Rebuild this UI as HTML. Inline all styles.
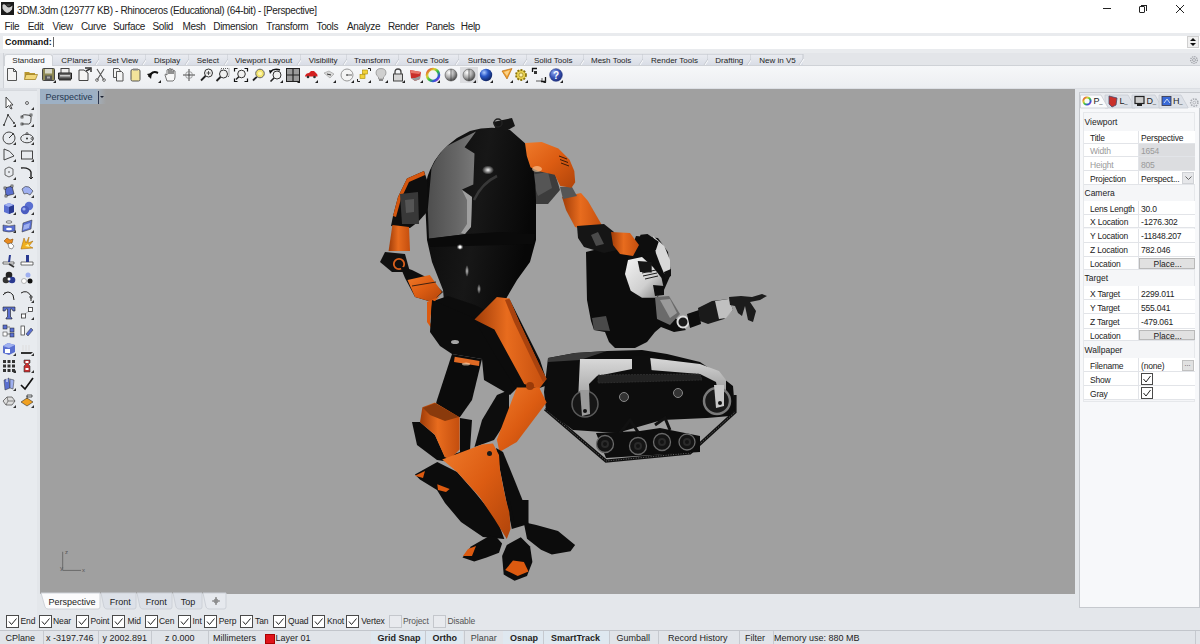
<!DOCTYPE html>
<html><head><meta charset="utf-8">
<style>
*{margin:0;padding:0;box-sizing:border-box}
html,body{width:1200px;height:644px;overflow:hidden;background:#e4e7eb;font-family:"Liberation Sans",sans-serif;font-size:9.5px;color:#1a1a1a;position:relative}
.a{position:absolute;white-space:nowrap}
.t10{font-size:10px;letter-spacing:-0.35px;color:#222}
.t8{font-size:8px;color:#1e1e1e}
.t9{font-size:9px;color:#222}
svg{overflow:visible}
</style></head><body>
<div class="a" style="left:0;top:0;width:1200px;height:33px;background:#fff"></div>
<svg class="a" style="left:1px;top:2px" width="13" height="13" viewBox="0 0 13 13"><rect width="13" height="13" fill="#1b1b1b"/><path d="M1.5 3 Q3 1.5 5 3.5 Q6 5.5 8 5.5 Q10 5 11.5 3.5 L11 7.5 Q8.5 11 6 11 Q3 10 1.5 6.5 Z" fill="#cfcfcf"/><path d="M5 2.5 Q7.5 1.5 10 2.5 Q9 5 6.5 4.5Z" fill="#444"/></svg>
<div class="a t10" style="left:17px;top:4.5px">3DM.3dm (129777 KB) - Rhinoceros (Educational) (64-bit) - [Perspective]</div>
<div class="a" style="left:1103px;top:8px;width:8px;height:1px;background:#222"></div>
<div class="a" style="left:1139px;top:6px;width:6px;height:7px;border:1px solid #222;border-radius:1px"></div>
<div class="a" style="left:1141px;top:5px;width:6px;height:6px;border-top:1px solid #222;border-right:1px solid #222"></div>
<svg class="a" style="left:1175px;top:4px" width="10" height="10"><path d="M1 1L9 9M9 1L1 9" stroke="#222" stroke-width="1"/></svg>
<div class="a t10" style="left:4.5px;top:21px">File</div>
<div class="a t10" style="left:27.7px;top:21px">Edit</div>
<div class="a t10" style="left:52.5px;top:21px">View</div>
<div class="a t10" style="left:81px;top:21px">Curve</div>
<div class="a t10" style="left:113px;top:21px">Surface</div>
<div class="a t10" style="left:152.5px;top:21px">Solid</div>
<div class="a t10" style="left:182.5px;top:21px">Mesh</div>
<div class="a t10" style="left:213.3px;top:21px">Dimension</div>
<div class="a t10" style="left:266.3px;top:21px">Transform</div>
<div class="a t10" style="left:316.5px;top:21px">Tools</div>
<div class="a t10" style="left:347px;top:21px">Analyze</div>
<div class="a t10" style="left:388px;top:21px">Render</div>
<div class="a t10" style="left:426px;top:21px">Panels</div>
<div class="a t10" style="left:460.8px;top:21px">Help</div>
<div class="a" style="left:0;top:33px;width:1200px;height:20px;background:#e9ebee"></div>
<div class="a" style="left:3px;top:36px;width:1197px;height:13px;background:#fff"></div>
<div class="a" style="left:5px;top:37px;font-weight:bold;font-size:9px;letter-spacing:-0.05px;color:#111">Command:</div>
<div class="a" style="left:53px;top:37px;width:1px;height:10px;background:#666"></div>
<div class="a" style="left:1187px;top:36px;width:12px;height:12px;background:#f0f0f0;border:1px solid #cfcfcf"></div>
<div class="a" style="left:1190px;top:38px;width:0;height:0;border-left:3px solid transparent;border-right:3px solid transparent;border-bottom:3px solid #111"></div>
<div class="a" style="left:1190px;top:43px;width:0;height:0;border-left:3px solid transparent;border-right:3px solid transparent;border-top:3px solid #111"></div>
<div class="a" style="left:0;top:53px;width:1200px;height:13px;background:#e3e5e9"></div>
<div class="a" style="left:3px;top:53px;width:1px;height:35px;background:#cfd2d7"></div>
<div class="a" style="left:4px;top:54px;width:49px;height:12px;background:#f7f8fa;border-radius:3px 3px 0 0;border:1px solid #d0d3d8;border-bottom:none"></div>
<div class="a t8" style="left:12.3px;top:56px">Standard</div>
<div class="a" style="left:53px;top:54px;width:46px;height:11px;background:linear-gradient(#e9ebf0,#d9dde6);border-top:1px solid #d3d6dc"></div>
<svg class="a" style="left:94px;top:54px" width="7" height="12"><path d="M1 11 L5 5 L5 0" stroke="#c4c8cf" stroke-width="1" fill="none"/><path d="M2 11 L6 5" stroke="#fafbfc" stroke-width="1"/></svg>
<div class="a t8" style="left:61.3px;top:56px">CPlanes</div>
<div class="a" style="left:99px;top:54px;width:47px;height:11px;background:linear-gradient(#e9ebf0,#d9dde6);border-top:1px solid #d3d6dc"></div>
<svg class="a" style="left:141px;top:54px" width="7" height="12"><path d="M1 11 L5 5 L5 0" stroke="#c4c8cf" stroke-width="1" fill="none"/><path d="M2 11 L6 5" stroke="#fafbfc" stroke-width="1"/></svg>
<div class="a t8" style="left:106.7px;top:56px">Set View</div>
<div class="a" style="left:146px;top:54px;width:43px;height:11px;background:linear-gradient(#e9ebf0,#d9dde6);border-top:1px solid #d3d6dc"></div>
<svg class="a" style="left:184px;top:54px" width="7" height="12"><path d="M1 11 L5 5 L5 0" stroke="#c4c8cf" stroke-width="1" fill="none"/><path d="M2 11 L6 5" stroke="#fafbfc" stroke-width="1"/></svg>
<div class="a t8" style="left:154px;top:56px">Display</div>
<div class="a" style="left:189px;top:54px;width:38.5px;height:11px;background:linear-gradient(#e9ebf0,#d9dde6);border-top:1px solid #d3d6dc"></div>
<svg class="a" style="left:222.5px;top:54px" width="7" height="12"><path d="M1 11 L5 5 L5 0" stroke="#c4c8cf" stroke-width="1" fill="none"/><path d="M2 11 L6 5" stroke="#fafbfc" stroke-width="1"/></svg>
<div class="a t8" style="left:196.7px;top:56px">Select</div>
<div class="a" style="left:227.5px;top:54px;width:73.5px;height:11px;background:linear-gradient(#e9ebf0,#d9dde6);border-top:1px solid #d3d6dc"></div>
<svg class="a" style="left:296px;top:54px" width="7" height="12"><path d="M1 11 L5 5 L5 0" stroke="#c4c8cf" stroke-width="1" fill="none"/><path d="M2 11 L6 5" stroke="#fafbfc" stroke-width="1"/></svg>
<div class="a t8" style="left:235px;top:56px">Viewport Layout</div>
<div class="a" style="left:301px;top:54px;width:46px;height:11px;background:linear-gradient(#e9ebf0,#d9dde6);border-top:1px solid #d3d6dc"></div>
<svg class="a" style="left:342px;top:54px" width="7" height="12"><path d="M1 11 L5 5 L5 0" stroke="#c4c8cf" stroke-width="1" fill="none"/><path d="M2 11 L6 5" stroke="#fafbfc" stroke-width="1"/></svg>
<div class="a t8" style="left:308.7px;top:56px">Visibility</div>
<div class="a" style="left:347px;top:54px;width:52px;height:11px;background:linear-gradient(#e9ebf0,#d9dde6);border-top:1px solid #d3d6dc"></div>
<svg class="a" style="left:394px;top:54px" width="7" height="12"><path d="M1 11 L5 5 L5 0" stroke="#c4c8cf" stroke-width="1" fill="none"/><path d="M2 11 L6 5" stroke="#fafbfc" stroke-width="1"/></svg>
<div class="a t8" style="left:354px;top:56px">Transform</div>
<div class="a" style="left:399px;top:54px;width:60px;height:11px;background:linear-gradient(#e9ebf0,#d9dde6);border-top:1px solid #d3d6dc"></div>
<svg class="a" style="left:454px;top:54px" width="7" height="12"><path d="M1 11 L5 5 L5 0" stroke="#c4c8cf" stroke-width="1" fill="none"/><path d="M2 11 L6 5" stroke="#fafbfc" stroke-width="1"/></svg>
<div class="a t8" style="left:406.7px;top:56px">Curve Tools</div>
<div class="a" style="left:459px;top:54px;width:68px;height:11px;background:linear-gradient(#e9ebf0,#d9dde6);border-top:1px solid #d3d6dc"></div>
<svg class="a" style="left:522px;top:54px" width="7" height="12"><path d="M1 11 L5 5 L5 0" stroke="#c4c8cf" stroke-width="1" fill="none"/><path d="M2 11 L6 5" stroke="#fafbfc" stroke-width="1"/></svg>
<div class="a t8" style="left:467.7px;top:56px">Surface Tools</div>
<div class="a" style="left:527px;top:54px;width:57px;height:11px;background:linear-gradient(#e9ebf0,#d9dde6);border-top:1px solid #d3d6dc"></div>
<svg class="a" style="left:579px;top:54px" width="7" height="12"><path d="M1 11 L5 5 L5 0" stroke="#c4c8cf" stroke-width="1" fill="none"/><path d="M2 11 L6 5" stroke="#fafbfc" stroke-width="1"/></svg>
<div class="a t8" style="left:534px;top:56px">Solid Tools</div>
<div class="a" style="left:584px;top:54px;width:59px;height:11px;background:linear-gradient(#e9ebf0,#d9dde6);border-top:1px solid #d3d6dc"></div>
<svg class="a" style="left:638px;top:54px" width="7" height="12"><path d="M1 11 L5 5 L5 0" stroke="#c4c8cf" stroke-width="1" fill="none"/><path d="M2 11 L6 5" stroke="#fafbfc" stroke-width="1"/></svg>
<div class="a t8" style="left:591px;top:56px">Mesh Tools</div>
<div class="a" style="left:643px;top:54px;width:65px;height:11px;background:linear-gradient(#e9ebf0,#d9dde6);border-top:1px solid #d3d6dc"></div>
<svg class="a" style="left:703px;top:54px" width="7" height="12"><path d="M1 11 L5 5 L5 0" stroke="#c4c8cf" stroke-width="1" fill="none"/><path d="M2 11 L6 5" stroke="#fafbfc" stroke-width="1"/></svg>
<div class="a t8" style="left:651px;top:56px">Render Tools</div>
<div class="a" style="left:708px;top:54px;width:43px;height:11px;background:linear-gradient(#e9ebf0,#d9dde6);border-top:1px solid #d3d6dc"></div>
<svg class="a" style="left:746px;top:54px" width="7" height="12"><path d="M1 11 L5 5 L5 0" stroke="#c4c8cf" stroke-width="1" fill="none"/><path d="M2 11 L6 5" stroke="#fafbfc" stroke-width="1"/></svg>
<div class="a t8" style="left:715.3px;top:56px">Drafting</div>
<div class="a" style="left:751px;top:54px;width:51.5px;height:11px;background:linear-gradient(#e9ebf0,#d9dde6);border-top:1px solid #d3d6dc"></div>
<svg class="a" style="left:797.5px;top:54px" width="7" height="12"><path d="M1 11 L5 5 L5 0" stroke="#c4c8cf" stroke-width="1" fill="none"/><path d="M2 11 L6 5" stroke="#fafbfc" stroke-width="1"/></svg>
<div class="a t8" style="left:759.3px;top:56px">New in V5</div>
<div class="a" style="left:802px;top:65px;width:398px;height:1px;background:#cfd2d7"></div>
<div class="a" style="left:53px;top:65px;width:749px;height:1px;background:#cfd2d7"></div>
<svg class="a" style="left:1189px;top:55px" width="10" height="10" viewBox="0 0 10 10"><circle cx="5" cy="5" r="3.3" fill="none" stroke="#9a9da3" stroke-width="1.2" stroke-dasharray="1.3 0.9"/><circle cx="5" cy="5" r="1.5" fill="none" stroke="#9a9da3" stroke-width="0.8"/></svg>
<div class="a" style="left:4px;top:66px;width:1196px;height:22px;background:linear-gradient(#f6f7f9,#eceef1)"></div>
<div class="a" style="left:0;top:88px;width:1200px;height:2px;background:#dcdfe4"></div>
<svg width="0" height="0" style="position:absolute"><defs>
<linearGradient id="cw" x1="0" y1="0" x2="1" y2="1"><stop offset="0" stop-color="#e03030"/><stop offset="0.3" stop-color="#e0d030"/><stop offset="0.55" stop-color="#30c040"/><stop offset="0.8" stop-color="#3050e0"/><stop offset="1" stop-color="#c030c0"/></linearGradient>
<radialGradient id="sg" cx="0.35" cy="0.3" r="0.8"><stop offset="0" stop-color="#fff"/><stop offset="0.5" stop-color="#aaa"/><stop offset="1" stop-color="#333"/></radialGradient>
<radialGradient id="sb" cx="0.35" cy="0.3" r="0.8"><stop offset="0" stop-color="#aac8ff"/><stop offset="0.4" stop-color="#2a58c8"/><stop offset="1" stop-color="#0a1a50"/></radialGradient>
<radialGradient id="sb2" cx="0.35" cy="0.3" r="0.8"><stop offset="0" stop-color="#8fa8f0"/><stop offset="0.5" stop-color="#3a55b8"/><stop offset="1" stop-color="#1a2a78"/></radialGradient>
</defs></svg>
<svg class="a" style="left:5.699999999999999px;top:68px" width="14" height="14" viewBox="0 0 14 14"><path d="M1.5 0.5 H7.5 L10.5 3.5 V12.5 H1.5Z" fill="#f4f4f4" stroke="#555"/><path d="M7.5 0.5 V3.5 H10.5" fill="none" stroke="#555"/></svg>
<svg class="a" style="left:23.5px;top:68px" width="14" height="14" viewBox="0 0 14 14"><path d="M0.5 4 H5 L6 5 H11 V11.5 H0.5Z" fill="#b8962e"/><path d="M2 6.5 H13.5 L11.5 11.5 H0.5Z" fill="#f1d77a" stroke="#9a7a1f" stroke-width="0.7"/></svg>
<svg class="a" style="left:41.5px;top:68px" width="14" height="14" viewBox="0 0 14 14"><rect x="0.5" y="0.5" width="12" height="12" rx="1" fill="#8f8a55" stroke="#444"/><rect x="3" y="1" width="7" height="4.5" fill="#d8d8c8"/><rect x="3" y="7.5" width="7" height="4.5" fill="#555"/><rect x="5" y="8.5" width="3" height="2" fill="#aaa"/><path d="M14 12 L14 15 L11 15Z" fill="#222"/></svg>
<svg class="a" style="left:58px;top:68px" width="14" height="14" viewBox="0 0 14 14"><rect x="3" y="0.5" width="8" height="5" fill="#eee" stroke="#444"/><path d="M0.5 5 H13.5 V11 H0.5Z" fill="#666" stroke="#222"/><rect x="2" y="7" width="10" height="1.5" fill="#ccc"/><rect x="1" y="11" width="12" height="1.5" fill="#333"/></svg>
<svg class="a" style="left:77.5px;top:68px" width="14" height="14" viewBox="0 0 14 14"><path d="M1 2 H6 L10 5 V12.5 H1Z" fill="#f4f4f4" stroke="#444"/><path d="M7 0 L13 0 L13 4" fill="none" stroke="#333" stroke-width="1.5"/><path d="M8 3 L12 1" stroke="#333" stroke-width="1.5"/></svg>
<svg class="a" style="left:93.5px;top:68px" width="14" height="14" viewBox="0 0 14 14"><path d="M3 1 L10 12 M10 1 L3 12" stroke="#555" stroke-width="1.1"/><circle cx="3" cy="12" r="1.4" fill="none" stroke="#777"/><circle cx="10" cy="12" r="1.4" fill="none" stroke="#777"/></svg>
<svg class="a" style="left:111.5px;top:68px" width="14" height="14" viewBox="0 0 14 14"><path d="M1.5 0.5 H6.5 L8 2 V9.5 H1.5Z" fill="#f4f4f4" stroke="#555"/><path d="M4.5 3.5 H9.5 L11 5 V13 H4.5Z" fill="#f4f4f4" stroke="#555"/></svg>
<svg class="a" style="left:128.5px;top:68px" width="14" height="14" viewBox="0 0 14 14"><rect x="2" y="1.5" width="9" height="11.5" rx="1.5" fill="#f2e39a" stroke="#555"/><rect x="4" y="0.5" width="5" height="2" fill="#888"/></svg>
<svg class="a" style="left:146.5px;top:68px" width="14" height="14" viewBox="0 0 14 14"><path d="M2 9 Q5 2 11 5" fill="none" stroke="#111" stroke-width="2"/><path d="M0 6 L4 11 L5 5Z" fill="#111"/><path d="M14 12 L14 15 L11 15Z" fill="#222"/></svg>
<svg class="a" style="left:163.5px;top:68px" width="14" height="14" viewBox="0 0 14 14"><path d="M3 13 L1 7 Q1 5 3 7 V2 Q4 0.5 5 2 V6 V1 Q6 0 7 1 V6 V1.5 Q8 0.5 9 1.5 V6 V3 Q10 2 11 3 V9 Q11 12 9 13Z" fill="#f7f7f7" stroke="#555" stroke-width="0.8"/></svg>
<svg class="a" style="left:182px;top:68px" width="14" height="14" viewBox="0 0 14 14"><path d="M7 1 V13 M1 7 H13" stroke="#333" stroke-width="0.9"/><circle cx="7" cy="7" r="3.5" fill="none" stroke="#888" stroke-width="0.8"/></svg>
<svg class="a" style="left:199.5px;top:68px" width="14" height="14" viewBox="0 0 14 14"><circle cx="8.5" cy="5" r="4" fill="#f0f0f0" stroke="#333"/><path d="M5.5 8 L1 12.5" stroke="#222" stroke-width="1.8"/><path d="M8.5 3 V7 M6.5 5 H10.5" stroke="#333" stroke-width="0.8"/></svg>
<svg class="a" style="left:216px;top:68px" width="14" height="14" viewBox="0 0 14 14"><rect x="5" y="0.5" width="8" height="8" fill="none" stroke="#666" stroke-dasharray="1 1"/><circle cx="7.5" cy="6" r="4" fill="#f0f0f0" stroke="#333"/><path d="M4.5 9 L0.5 13" stroke="#222" stroke-width="1.8"/></svg>
<svg class="a" style="left:233.5px;top:68px" width="14" height="14" viewBox="0 0 14 14"><path d="M0.5 3.5 V0.5 H3.5 M10.5 0.5 H13.5 V3.5 M13.5 10.5 V13.5 H10.5 M3.5 13.5 H0.5 V10.5" fill="none" stroke="#111" stroke-width="1.2"/><circle cx="7.5" cy="6" r="3.8" fill="#f0f0f0" stroke="#333"/><path d="M4.8 8.8 L2 11.5" stroke="#222" stroke-width="1.5"/></svg>
<svg class="a" style="left:251.5px;top:68px" width="14" height="14" viewBox="0 0 14 14"><circle cx="8" cy="5.5" r="4.3" fill="#f2e36b" stroke="#666"/><circle cx="8" cy="5.5" r="2" fill="#fff6b0"/><path d="M4.8 8.8 L1 12.5" stroke="#222" stroke-width="1.8"/></svg>
<svg class="a" style="left:268.5px;top:68px" width="14" height="14" viewBox="0 0 14 14"><circle cx="8" cy="7" r="4" fill="#f0f0f0" stroke="#333"/><path d="M5 10 L1.5 13.5" stroke="#222" stroke-width="1.6"/><path d="M1 4 Q5 0 11 2" fill="none" stroke="#111" stroke-width="1.5"/><path d="M0 2 L1 6 L3.5 3Z" fill="#111"/><path d="M14 12 L14 15 L11 15Z" fill="#222"/></svg>
<svg class="a" style="left:286px;top:68px" width="14" height="14" viewBox="0 0 14 14"><rect x="0.5" y="0.5" width="13" height="13" fill="#9a9a9a" stroke="#222"/><path d="M7 0.5 V13.5 M0.5 7 H13.5" stroke="#222" stroke-width="1.2"/><path d="M14 12 L14 15 L11 15Z" fill="#222"/></svg>
<svg class="a" style="left:303.5px;top:68px" width="14" height="14" viewBox="0 0 14 14"><path d="M1 8 Q2 5 5 5 L7 3 H10 L12 5 Q14 6 13.5 8.5 H1Z" fill="#d42020"/><circle cx="4" cy="9" r="1.3" fill="#333"/><circle cx="10.5" cy="9" r="1.3" fill="#333"/><path d="M14 12 L14 15 L11 15Z" fill="#222"/></svg>
<svg class="a" style="left:322px;top:68px" width="14" height="14" viewBox="0 0 14 14"><path d="M2 5 L7 3 L12 6 L8 10 Z" fill="#d8d8d8" stroke="#999" stroke-width="0.6"/><path d="M5 6 L9 7" stroke="#333" stroke-width="1"/><path d="M14 12 L14 15 L11 15Z" fill="#222"/></svg>
<svg class="a" style="left:340px;top:68px" width="14" height="14" viewBox="0 0 14 14"><circle cx="7" cy="7" r="6" fill="#f4f4f4" stroke="#999" stroke-width="1"/><path d="M7 7 H12" stroke="#666"/><circle cx="7" cy="7" r="1" fill="#666"/><path d="M14 12 L14 15 L11 15Z" fill="#222"/></svg>
<svg class="a" style="left:356.5px;top:68px" width="14" height="14" viewBox="0 0 14 14"><rect x="5.5" y="2" width="5" height="4" fill="#f2d23a" stroke="#a88a00" stroke-width="0.6"/><rect x="3" y="6.5" width="5" height="4" fill="#f2d23a" stroke="#a88a00" stroke-width="0.6"/><path d="M0.5 11 V13.5 H3 M11 0.5 H13.5 V3" fill="none" stroke="#222"/><path d="M14 12 L14 15 L11 15Z" fill="#222"/></svg>
<svg class="a" style="left:373.5px;top:68px" width="14" height="14" viewBox="0 0 14 14"><path d="M7 0.5 Q12 0.5 12 5 Q12 7.5 9.5 9 V11 H4.5 V9 Q2 7.5 2 5 Q2 0.5 7 0.5Z" fill="#cfcfcf" stroke="#888" stroke-width="0.7"/><rect x="5" y="11" width="4" height="2" fill="#888"/><path d="M14 12 L14 15 L11 15Z" fill="#222"/></svg>
<svg class="a" style="left:391px;top:68px" width="14" height="14" viewBox="0 0 14 14"><path d="M4 6 V4 Q4 1 7 1 Q10 1 10 4 V6" fill="none" stroke="#444" stroke-width="1.3"/><rect x="2.5" y="6" width="9" height="7" fill="#d6d6d6" stroke="#444"/><path d="M14 12 L14 15 L11 15Z" fill="#222"/></svg>
<svg class="a" style="left:408.5px;top:68px" width="14" height="14" viewBox="0 0 14 14"><path d="M1 2 L12 4 L11 11 L6 13 L2 10Z" fill="#c9302a"/><path d="M1 2 L12 4 L10 6 L2 5Z" fill="#e8776a"/><path d="M2 10 L6 13 L11 11 V8 L6 10Z" fill="#9a9a9a"/><path d="M14 12 L14 15 L11 15Z" fill="#222"/></svg>
<svg class="a" style="left:426px;top:68px" width="14" height="14" viewBox="0 0 14 14"><circle cx="7" cy="7" r="6" fill="none" stroke="url(#cw)" stroke-width="2.6"/><path d="M14 12 L14 15 L11 15Z" fill="#222"/></svg>
<svg class="a" style="left:443.5px;top:68px" width="14" height="14" viewBox="0 0 14 14"><circle cx="7" cy="7" r="6" fill="url(#sg)" stroke="#555" stroke-width="0.6"/><path d="M7 1 V13" stroke="#333" stroke-width="0.6"/></svg>
<svg class="a" style="left:461.5px;top:68px" width="14" height="14" viewBox="0 0 14 14"><rect x="-2" y="-1" width="18" height="16" fill="#dcdde0"/><circle cx="7" cy="7" r="6" fill="url(#sg)" stroke="#555" stroke-width="0.6"/><path d="M7 1 V13" stroke="#333" stroke-width="0.6"/><path d="M14 12 L14 15 L11 15Z" fill="#222"/></svg>
<svg class="a" style="left:479px;top:68px" width="14" height="14" viewBox="0 0 14 14"><circle cx="7" cy="7" r="6.2" fill="url(#sb)"/><path d="M14 12 L14 15 L11 15Z" fill="#222"/></svg>
<svg class="a" style="left:498.5px;top:68px" width="14" height="14" viewBox="0 0 14 14"><path d="M3 3 L13 0.5 L8 11Z" fill="#f0a030" stroke="#b06000" stroke-width="0.6"/><path d="M5 4 L11 2 L8 8Z" fill="#fbd38a"/><path d="M14 12 L14 15 L11 15Z" fill="#222"/></svg>
<svg class="a" style="left:514px;top:68px" width="14" height="14" viewBox="0 0 14 14"><circle cx="7" cy="7" r="5" fill="#e8d050" stroke="#8a7410" stroke-width="1.8" stroke-dasharray="2 1.2"/><circle cx="7" cy="7" r="2" fill="#fff3b0" stroke="#8a7410" stroke-width="0.6"/><path d="M14 12 L14 15 L11 15Z" fill="#222"/></svg>
<svg class="a" style="left:531.5px;top:68px" width="14" height="14" viewBox="0 0 14 14"><path d="M0.5 4 V0.5 H5 M13.5 9 V13.5 H9" fill="none" stroke="#111" stroke-width="1.3"/><path d="M4 13 H10 M10 10 V13" stroke="#333" stroke-width="0.8"/><rect x="2" y="3" width="3" height="3" fill="#333"/><path d="M14 12 L14 15 L11 15Z" fill="#222"/></svg>
<svg class="a" style="left:548.5px;top:68px" width="14" height="14" viewBox="0 0 14 14"><circle cx="7" cy="7" r="6.3" fill="url(#sb2)" stroke="#1c2f7a" stroke-width="0.6"/><text x="7" y="11" font-size="10" font-weight="bold" fill="#fff" text-anchor="middle" font-family="Liberation Sans">?</text><path d="M14 12 L14 15 L11 15Z" fill="#222"/></svg>
<div class="a" style="left:0;top:90px;width:37px;height:540px;background:#e8ebef"></div>
<div class="a" style="left:0;top:90px;width:37px;height:1px;background:#d6d9de"></div>
<svg class="a" style="left:2px;top:95.8px" width="14" height="14" viewBox="0 0 14 14"><path d="M4 1 L4 12 L6.5 9.5 L9 13 L10 12.5 L8 9 L11 9Z" fill="#fff" stroke="#333" stroke-width="0.9"/></svg>
<svg class="a" style="left:20px;top:95.8px" width="14" height="14" viewBox="0 0 14 14"><circle cx="7" cy="7" r="1.5" fill="none" stroke="#444" stroke-width="0.8"/><path d="M14 11 L14 14 L11 14Z" fill="#333"/></svg>
<svg class="a" style="left:2px;top:113.3px" width="14" height="14" viewBox="0 0 14 14"><path d="M2 12 L6 2 L12 10" fill="none" stroke="#333" stroke-width="0.9"/><circle cx="2" cy="12" r="1" fill="#333"/><circle cx="6" cy="2" r="1" fill="#333"/><circle cx="12" cy="10" r="1" fill="#333"/><path d="M14 11 L14 14 L11 14Z" fill="#333"/></svg>
<svg class="a" style="left:20px;top:113.3px" width="14" height="14" viewBox="0 0 14 14"><path d="M2 4 Q2 1 7 2 Q12 2 11 6 Q11 12 7 11 H2" fill="none" stroke="#333" stroke-width="0.9"/><rect x="1" y="3" width="2" height="2" fill="none" stroke="#333" stroke-width="0.7"/><rect x="10" y="1" width="2" height="2" fill="none" stroke="#333" stroke-width="0.7"/><rect x="1" y="10" width="2" height="2" fill="none" stroke="#333" stroke-width="0.7"/><path d="M14 11 L14 14 L11 14Z" fill="#333"/></svg>
<svg class="a" style="left:2px;top:130.9px" width="14" height="14" viewBox="0 0 14 14"><circle cx="7" cy="7" r="6" fill="none" stroke="#333" stroke-width="0.9"/><path d="M7 7 L11 3" stroke="#333"/><circle cx="11" cy="3" r="1" fill="#333"/><path d="M14 11 L14 14 L11 14Z" fill="#333"/></svg>
<svg class="a" style="left:20px;top:130.9px" width="14" height="14" viewBox="0 0 14 14"><ellipse cx="7" cy="7.5" rx="6.3" ry="4.3" fill="none" stroke="#333" stroke-width="0.9"/><circle cx="7" cy="7.5" r="1" fill="#333"/><circle cx="7" cy="2.5" r="1" fill="none" stroke="#333" stroke-width="0.7"/><circle cx="12" cy="7.5" r="1" fill="none" stroke="#333" stroke-width="0.7"/><path d="M14 11 L14 14 L11 14Z" fill="#333"/></svg>
<svg class="a" style="left:2px;top:148.4px" width="14" height="14" viewBox="0 0 14 14"><path d="M2 1 L2 12 L12 8 Q8 2 2 1" fill="none" stroke="#333" stroke-width="0.9"/><path d="M14 11 L14 14 L11 14Z" fill="#333"/></svg>
<svg class="a" style="left:20px;top:148.4px" width="14" height="14" viewBox="0 0 14 14"><rect x="1.5" y="3" width="11" height="8" fill="none" stroke="#333" stroke-width="0.9"/><path d="M14 11 L14 14 L11 14Z" fill="#333"/></svg>
<svg class="a" style="left:2px;top:166.0px" width="14" height="14" viewBox="0 0 14 14"><path d="M3 3 L7 1 L11 3 L11 9 L7 11 L3 9Z" fill="none" stroke="#444" stroke-width="0.8"/><circle cx="7" cy="6" r="0.8" fill="#444"/><path d="M14 11 L14 14 L11 14Z" fill="#333"/></svg>
<svg class="a" style="left:20px;top:166.0px" width="14" height="14" viewBox="0 0 14 14"><path d="M1 2 Q9 1 11 6 V12" fill="none" stroke="#222" stroke-width="1.4"/><path d="M9 11 L11 13 L13 11" fill="none" stroke="#222"/></svg>
<svg class="a" style="left:2px;top:183.6px" width="14" height="14" viewBox="0 0 14 14"><path d="M3 4 L10 2 L12 10 L4 12Z" fill="#5a6fd0" stroke="#222" stroke-width="0.6"/><rect x="2" y="3" width="2" height="2" fill="#fff" stroke="#111" stroke-width="0.6"/><rect x="9" y="1" width="2" height="2" fill="#fff" stroke="#111" stroke-width="0.6"/><rect x="3" y="11" width="2" height="2" fill="#fff" stroke="#111" stroke-width="0.6"/><path d="M14 11 L14 14 L11 14Z" fill="#333"/></svg>
<svg class="a" style="left:20px;top:183.6px" width="14" height="14" viewBox="0 0 14 14"><path d="M2 5 Q5 1 9 3 L13 7 L10 11 Q7 8 4 10Z" fill="#9fb0f0" stroke="#333" stroke-width="0.6"/><path d="M14 11 L14 14 L11 14Z" fill="#333"/></svg>
<svg class="a" style="left:2px;top:201.1px" width="14" height="14" viewBox="0 0 14 14"><path d="M2 4 L7 2 L12 4 V11 L7 13 L2 11Z" fill="#5a6fd0"/><path d="M2 4 L7 2 L12 4 L7 6Z" fill="#9fb0f0"/><path d="M7 6 V13 L12 11 V4Z" fill="#2a3a90"/><path d="M14 11 L14 14 L11 14Z" fill="#333"/></svg>
<svg class="a" style="left:20px;top:201.1px" width="14" height="14" viewBox="0 0 14 14"><circle cx="9" cy="5" r="4.2" fill="#5a6fd0"/><circle cx="5" cy="9" r="4.2" fill="#4a5cc0"/><circle cx="4" cy="8" r="1.6" fill="#9fb0f0"/><path d="M14 11 L14 14 L11 14Z" fill="#333"/></svg>
<svg class="a" style="left:2px;top:218.7px" width="14" height="14" viewBox="0 0 14 14"><ellipse cx="7" cy="3" rx="3" ry="1.2" fill="none" stroke="#333" stroke-width="0.6"/><path d="M1 6 Q7 8 13 6 V12 Q7 14 1 12Z" fill="#5a6fd0" stroke="#333" stroke-width="0.5"/><ellipse cx="7" cy="10" rx="3" ry="1.3" fill="#fff"/><path d="M14 11 L14 14 L11 14Z" fill="#333"/></svg>
<svg class="a" style="left:20px;top:218.7px" width="14" height="14" viewBox="0 0 14 14"><path d="M3 4 L12 1 L11 10 L2 13Z" fill="#5a6fd0" stroke="#333" stroke-width="0.5"/><path d="M4 6 L10 4 L9 9 L3 11Z" fill="#9fb0f0"/><path d="M14 11 L14 14 L11 14Z" fill="#333"/></svg>
<svg class="a" style="left:2px;top:236.2px" width="14" height="14" viewBox="0 0 14 14"><path d="M2 5 L5 2 L8 4 L11 3 L10 7 L6 8Z" fill="#e88a20" stroke="#8a4a00" stroke-width="0.6"/><path d="M6 8 L9 7 L12 10 L10 13 L7 12Z" fill="#fff" stroke="#555" stroke-width="0.6"/></svg>
<svg class="a" style="left:20px;top:236.2px" width="14" height="14" viewBox="0 0 14 14"><path d="M1 13 L4 2 L6 7 L9 1 L8 7 L13 5 L9 10 L13 12Z" fill="#f0b020" stroke="#a06000" stroke-width="0.5"/><path d="M5 10 L8 8 L10 11Z" fill="#fff3a0"/></svg>
<svg class="a" style="left:2px;top:253.8px" width="14" height="14" viewBox="0 0 14 14"><path d="M1 8 H12 V10 H1Z" fill="#fff" stroke="#333" stroke-width="0.7"/><path d="M7 1 L9 1 L8 8 L6 8Z" fill="#2a3a90"/><path d="M7 10 L12 13" stroke="#333" stroke-width="1.6"/></svg>
<svg class="a" style="left:20px;top:253.8px" width="14" height="14" viewBox="0 0 14 14"><path d="M1 8 H13 V11 H1Z" fill="#fff" stroke="#333" stroke-width="0.7"/><path d="M6 1 L9 1 L9 8 L6 8Z" fill="#2a3a90"/></svg>
<svg class="a" style="left:2px;top:271.3px" width="14" height="14" viewBox="0 0 14 14"><circle cx="7" cy="4" r="3.3" fill="#222"/><circle cx="4" cy="9" r="3.3" fill="#333"/><circle cx="10" cy="9" r="3.3" fill="#2a3a90"/><circle cx="7" cy="8" r="1.5" fill="#fff"/></svg>
<svg class="a" style="left:20px;top:271.3px" width="14" height="14" viewBox="0 0 14 14"><circle cx="8" cy="4" r="2.5" fill="#9fb0f0"/><circle cx="4" cy="10" r="2.5" fill="#fff" stroke="#777" stroke-width="0.5"/><circle cx="10" cy="10" r="2.5" fill="#111"/></svg>
<svg class="a" style="left:2px;top:288.9px" width="14" height="14" viewBox="0 0 14 14"><path d="M1 6 Q6 0 11 6 L12 11" fill="none" stroke="#222" stroke-width="1"/><circle cx="3" cy="4" r="0.8" fill="#333"/></svg>
<svg class="a" style="left:20px;top:288.9px" width="14" height="14" viewBox="0 0 14 14"><path d="M1 4 Q7 0 11 7 L11 12" fill="none" stroke="#222" stroke-width="1"/><path d="M3 3 Q7 2 9 5" fill="none" stroke="#888" stroke-width="0.6"/><circle cx="11" cy="8" r="1.3" fill="none" stroke="#333" stroke-width="0.7"/><path d="M14 11 L14 14 L11 14Z" fill="#333"/></svg>
<svg class="a" style="left:2px;top:306.4px" width="14" height="14" viewBox="0 0 14 14"><path d="M1 1 H13 V5 H11 L10 3 H8.5 V11 L10 12 V13 H4 V12 L5.5 11 V3 H4 L3 5 H1Z" fill="#5a6fd0" stroke="#222" stroke-width="0.6"/></svg>
<svg class="a" style="left:20px;top:306.4px" width="14" height="14" viewBox="0 0 14 14"><rect x="1.5" y="8" width="4" height="4" fill="#fff" stroke="#333" stroke-width="0.8"/><rect x="8.5" y="1.5" width="4" height="4" fill="#fff" stroke="#333" stroke-width="0.8"/><path d="M5 8 L9 5" stroke="#333" stroke-width="0.7" stroke-dasharray="1 1"/><path d="M14 11 L14 14 L11 14Z" fill="#333"/></svg>
<svg class="a" style="left:2px;top:323.9px" width="14" height="14" viewBox="0 0 14 14"><rect x="1" y="1" width="4" height="4" fill="#5a6fd0" stroke="#222" stroke-width="0.5"/><rect x="1" y="8" width="4" height="4" fill="#fff" stroke="#222" stroke-width="0.5"/><rect x="8" y="4" width="4" height="4" fill="#5a6fd0" stroke="#222" stroke-width="0.5"/><rect x="8" y="9" width="4" height="4" fill="#5a6fd0" stroke="#222" stroke-width="0.5"/><path d="M5 3 H8 M5 10 H8" stroke="#333" stroke-width="0.6"/></svg>
<svg class="a" style="left:20px;top:323.9px" width="14" height="14" viewBox="0 0 14 14"><rect x="1" y="2" width="3.5" height="9" fill="#fff" stroke="#333" stroke-width="0.7"/><path d="M6 10 L11 4 L13 6 L8 12Z" fill="#5a6fd0" stroke="#333" stroke-width="0.5"/></svg>
<svg class="a" style="left:2px;top:341.5px" width="14" height="14" viewBox="0 0 14 14"><path d="M1 4 L6 1 L13 3 V10 L7 13 L1 11Z" fill="#5a6fd0"/><path d="M1 4 L6 1 L13 3 L7 6Z" fill="#9fb0f0"/><rect x="3" y="7" width="5" height="4" fill="#fff"/><path d="M14 11 L14 14 L11 14Z" fill="#333"/></svg>
<svg class="a" style="left:20px;top:341.5px" width="14" height="14" viewBox="0 0 14 14"><path d="M1 10 H13 L11 12 H1Z" fill="#333"/><path d="M3 3 V9 M6 3 V9 M9 3 V9" stroke="#fff" stroke-width="1.2"/><path d="M3 3 V9 M6 3 V9 M9 3 V9" stroke="#999" stroke-width="0.4"/><path d="M14 11 L14 14 L11 14Z" fill="#333"/></svg>
<svg class="a" style="left:2px;top:359.1px" width="14" height="14" viewBox="0 0 14 14"><g fill="#333"><rect x="1" y="1" width="3" height="3"/><rect x="5.5" y="1" width="3" height="3"/><rect x="10" y="1" width="3" height="3"/><rect x="1" y="5.5" width="3" height="3"/><rect x="5.5" y="5.5" width="3" height="3"/><rect x="10" y="5.5" width="3" height="3"/><rect x="1" y="10" width="3" height="3"/><rect x="5.5" y="10" width="3" height="3"/><rect x="10" y="10" width="3" height="3"/></g><path d="M14 11 L14 14 L11 14Z" fill="#333"/></svg>
<svg class="a" style="left:20px;top:359.1px" width="14" height="14" viewBox="0 0 14 14"><path d="M4 1 H10 V4 L8 5 L10 7 V13 H4 V7 L6 5 L4 4Z" fill="#c83030" stroke="#333" stroke-width="0.6"/><rect x="5.5" y="2" width="3" height="2" fill="#fff"/><rect x="5.5" y="9" width="3" height="2" fill="#fff"/><path d="M14 11 L14 14 L11 14Z" fill="#333"/></svg>
<svg class="a" style="left:2px;top:376.6px" width="14" height="14" viewBox="0 0 14 14"><path d="M2 3 L7 1 L8 11 L3 13Z" fill="#5a6fd0" stroke="#333" stroke-width="0.5"/><path d="M8 2 L12 3 L11 12 L8 11Z" fill="#9fb0f0" stroke="#333" stroke-width="0.5"/><path d="M5 1 V5" stroke="#fff" stroke-width="1"/><path d="M14 11 L14 14 L11 14Z" fill="#333"/></svg>
<svg class="a" style="left:20px;top:376.6px" width="14" height="14" viewBox="0 0 14 14"><path d="M1 8 L5 12 L13 1" fill="none" stroke="#111" stroke-width="1.7"/></svg>
<svg class="a" style="left:2px;top:394.2px" width="14" height="14" viewBox="0 0 14 14"><path d="M1 7 L5 3 L10 3 L13 7 L10 11 H4Z" fill="#ddd" stroke="#444" stroke-width="0.7"/><path d="M5 3 L6 7 L4 11 M6 7 H13" stroke="#444" stroke-width="0.6" fill="none"/><path d="M14 11 L14 14 L11 14Z" fill="#333"/></svg>
<svg class="a" style="left:20px;top:394.2px" width="14" height="14" viewBox="0 0 14 14"><path d="M1 8 L7 4 L13 8 L7 12Z" fill="#f0a020" stroke="#333" stroke-width="0.6"/><path d="M7 1 H12 V3 H7Z" fill="none" stroke="#333" stroke-width="0.8"/><path d="M7 2 V5" stroke="#333" stroke-width="0.7"/><path d="M14 11 L14 14 L11 14Z" fill="#333"/></svg>
<div class="a" style="left:37px;top:89px;width:3px;height:505px;background:#e3e6ea"></div>
<div class="a" style="left:40px;top:89px;width:1035px;height:505px;background:#a0a0a0"></div>
<div class="a" style="left:40px;top:89px;width:57px;height:14.5px;background:#9db0c4"></div>
<div class="a" style="left:97px;top:89px;width:9px;height:14.5px;background:linear-gradient(90deg,#a4b0bc,#a0a0a0)"></div>
<div class="a" style="left:45.5px;top:92px;font-size:9px;color:#243650">Perspective</div>
<div class="a" style="left:98px;top:91px;width:1px;height:13px;background:#2a3550"></div>
<div class="a" style="left:100px;top:96px;width:0;height:0;border-left:2px solid transparent;border-right:2px solid transparent;border-top:2.5px solid #1a2030"></div>
<svg class="a" style="left:55px;top:545px" width="40" height="30"><path d="M7.7 6.8 V25.4 H26" stroke="#6a6a6a" stroke-width="1" fill="none"/><text x="10" y="9" font-size="6" fill="#555" font-family="Liberation Sans">z</text><text x="27" y="27" font-size="6" fill="#555" font-family="Liberation Sans">x</text><text x="5" y="25" font-size="6" fill="#555" font-family="Liberation Sans">y</text></svg>
<svg class="a" style="left:0;top:0" width="1200" height="644" viewBox="0 0 1200 644">
<defs>
<clipPath id="vpc"><rect x="40" y="89" width="1035" height="505"/></clipPath>
<linearGradient id="org" x1="0" y1="0" x2="1" y2="1"><stop offset="0" stop-color="#ef7a2a"/><stop offset="0.5" stop-color="#dc5c12"/><stop offset="1" stop-color="#b0440a"/></linearGradient>
<linearGradient id="org2" x1="0" y1="0" x2="1" y2="0"><stop offset="0" stop-color="#a03c08"/><stop offset="0.45" stop-color="#e86c1e"/><stop offset="1" stop-color="#c44e0e"/></linearGradient>
<linearGradient id="gry" x1="0" y1="0" x2="1" y2="0"><stop offset="0" stop-color="#4e4e4e"/><stop offset="0.6" stop-color="#666"/><stop offset="1" stop-color="#7a7a7a"/></linearGradient><linearGradient id="blk" x1="0" y1="0" x2="1" y2="0.3"><stop offset="0" stop-color="#090909"/><stop offset="0.55" stop-color="#171717"/><stop offset="1" stop-color="#070707"/></linearGradient>
<radialGradient id="hl" cx="0.5" cy="0.5" r="0.5"><stop offset="0" stop-color="#fff" stop-opacity="0.95"/><stop offset="1" stop-color="#fff" stop-opacity="0"/></radialGradient>
<linearGradient id="wht" x1="0" y1="0" x2="1" y2="1"><stop offset="0" stop-color="#f4f4f4"/><stop offset="0.6" stop-color="#cfcfcf"/><stop offset="1" stop-color="#7a7a7a"/></linearGradient>
<linearGradient id="brk" x1="0" y1="0" x2="0" y2="1"><stop offset="0" stop-color="#d8d8d8"/><stop offset="1" stop-color="#8a8a8a"/></linearGradient>
</defs>
<g clip-path="url(#vpc)">
<!-- TANK -->
<path d="M545 409 L606 461 L690 453 L735 412 L735 395" fill="none" stroke="#111" stroke-width="3.2"/>
<path d="M545 409 L606 461 L690 453 L735 412" fill="none" stroke="#666" stroke-width="1" stroke-dasharray="1 1.5"/>
<path d="M544 392 L548 358 L575 353 L607 351 L642 350 L667 354 L700 362 L715 372 L733 386 L735 410 L730 416 L707 418 L662 420 L617 433 L573 430 L546 410 Z" fill="#0d0d0d"/>
<path d="M548 358 L575 353 L607 351 L580 360 L548 362Z" fill="#3a3a3a"/>
<path d="M580 359 L632 359 L632 369 L597 376 L589 384 L591 413 L583 417 L578 401 Z" fill="url(#brk)"/>
<path d="M650 358 L700 364 L719 371 L726 380 L726 402 L720 403 L716 382 L700 374 L650 370Z" fill="url(#brk)"/><path d="M632 356 L650 356 L652 374 L632 376Z" fill="#0e0e0e"/>
<circle cx="585" cy="404" r="13" fill="#161616" stroke="#5a5a5a" stroke-width="1.5"/>
<path d="M580 390 L589 390 L590 414 L582 416Z" fill="#9a9a9a"/>
<circle cx="585" cy="411" r="2" fill="#111"/>
<circle cx="717" cy="401" r="13" fill="#1a1a1a" stroke="#7a7a7a" stroke-width="2.5"/>
<path d="M714 385 L724 385 L724 406 L716 408Z" fill="#c8c8c8"/>
<circle cx="720" cy="403" r="2" fill="#111"/>
<circle cx="624" cy="397" r="4.5" fill="#333" stroke="#888" stroke-width="1"/>
<circle cx="678" cy="393" r="4.5" fill="#333" stroke="#888" stroke-width="1"/>
<path d="M598 375 L700 374 L702 380 L598 383Z" fill="#222" stroke="#3a3a3a" stroke-width="0.6" stroke-dasharray="2 1"/>
<path d="M596 433 L640 431 L660 428 L700 436 L700 452 L606 458Z" fill="#0d0d0d"/>
<g fill="#141414" stroke="#6a6a6a" stroke-width="1.3"><circle cx="605" cy="444" r="8.5"/><circle cx="638" cy="446" r="8.5"/><circle cx="662" cy="442" r="8.5"/><circle cx="687" cy="442" r="8"/></g>
<g fill="none" stroke="#2a2a2a" stroke-width="2"><circle cx="605" cy="444" r="3"/><circle cx="638" cy="446" r="3"/><circle cx="662" cy="442" r="3"/><circle cx="687" cy="442" r="3"/></g>
<path d="M620 433 L630 420 L640 435 M655 425 L665 418 L670 430" stroke="#111" stroke-width="3" fill="none"/>
<!-- SMALL ROBOT BODY -->
<path d="M586 252 L610 246 L628 246 L640 262 L660 300 L686 330 L674 332 L661 327 L655 332 L647 342 L635 348 L615 348 L609 342 L605 332 L594 330 L591 321 L587 300 Z" fill="#0c0c0c"/>
<path d="M636 236 L658 238 L668 252 L671 274 L664 290 L656 298 L636 298 L624 280 L628 258Z" fill="#0e0e0e"/>
<path d="M592 318 L606 316 L610 331 L594 330Z" fill="#4a4a4a"/>
<!-- small robot head -->
<path d="M628 260 L642 257 L653 267 L661.5 278 L664.3 290.7 L656 297.7 L642 297.7 L630.7 290.7 L625 274Z" fill="url(#wht)"/>
<path d="M653 236 L664.3 246 L670 260 L670 271 L664.3 274 L660 264 L655.9 253Z" fill="#d8d8d8"/>
<path d="M640.5 234.8 L647.5 234 L658.7 241.8 L655.9 250 L642 253 L637.7 244.6Z" fill="#0e0e0e"/>
<path d="M637.7 261 L651.7 262 L651.7 272.5 L640 272Z" fill="#151515"/>
<path d="M642 273 L656 270 M643 276 L657 273 M645 279 L658 276" stroke="#1a1a1a" stroke-width="1"/>
<path d="M653 285 L664 286 L664 295 L655 296Z" fill="#0e0e0e"/>
<path d="M664 272 L671 269 L671 276 L665 279Z" fill="#111"/>
<!-- small robot arm -->
<path d="M655 297 L669 296 L680 314 L670 325 L657 319Z" fill="#6a6a6a"/>
<path d="M660 300 L670 299 L677 313 L670 318Z" fill="#9a9a9a"/>
<circle cx="683" cy="322" r="5.5" fill="#1a1a1a" stroke="#ddd" stroke-width="2"/>
<path d="M687 314 L699 310 L701 324 L690 328Z" fill="#0d0d0d"/>
<path d="M698 308 L712 301 L729 299 L733 310 L724 319 L708 324 L700 321Z" fill="#1a1a1a"/>
<path d="M715 301 L729 299 L733 310 L726 318 L719 319Z" fill="#c0c0c0"/>
<path d="M729 297 L741 296 L752 297 L762 294 L767 296 L760 300 L750 302 L756 311 L753 322 L748 320 L745 306 L742 316 L738 313 L735 306 L730 305Z" fill="#1c1c1c"/>
<!-- BIG ROBOT RIGHT ARM -->
<path d="M562 197 L581 193 L588 201 L603 227 L588 231 L575 227 L566 210Z" fill="url(#org2)"/>
<path d="M560 187 L572 187 L577 196 L563 199Z" fill="#555"/>
<path d="M577 226 L604 224 L614 232 L617 250 L604 253 L584 247 L578 238Z" fill="#151515"/>
<path d="M591 235 L598 232 L604 244 L596 246Z" fill="#4a4a4a"/>
<path d="M611 232 L630 233 L639 245 L633 256 L620 254 L613 245Z" fill="url(#org2)"/>
<path d="M521 168 L553 167 L560 190 L548 204 L530 204 L522 190Z" fill="#3c3c3c"/>
<path d="M530 175 L548 172 L552 188 L538 196Z" fill="#555"/>
<!-- TORSO -->
<path d="M470 131 Q490 125 510 130 L527 145 Q536 170 536 200 L536 240 L530 262 L517 280 L507 297 L500 314 L476 322 L445 312 L443 290 L432 262 L427 240 L425 200 Q425 180 430 170 Q437 152 457 138 Z" fill="url(#blk)"/>
<path d="M431.5 168 Q438 154 447 146 L467 136 L476 131.5 L464.6 147.3 L474.5 153.5 L473.3 184.5 L462 189.5 L472 197 L471 226.8 L464.6 234.2 L429 238.5 L427.8 209.4 Z" fill="url(#gry)"/>
<path d="M462 190 L472 197 L471 227 L465 234 L461 233 L467 224 L467 200Z" fill="#b0b0b0" opacity="0.75"/>
<path d="M427.5 239 L464.6 234.2 L500 232 L535 234 L533 244 L430 247Z" fill="#0a0a0a"/>
<ellipse cx="488" cy="170" rx="6" ry="4.5" fill="url(#hl)"/>
<path d="M474 200 Q482 183 497 176" stroke="#5a5a5a" stroke-width="2.5" fill="none" opacity="0.5"/>
<ellipse cx="460" cy="247" rx="3.5" ry="3" fill="url(#hl)"/>
<ellipse cx="460" cy="247" rx="1.5" ry="1.5" fill="#fff"/>
<ellipse cx="467" cy="271" rx="2" ry="6" fill="url(#hl)" opacity="0.8"/>
<ellipse cx="479" cy="289" rx="2" ry="5" fill="url(#hl)" opacity="0.7"/>
<!-- head nub -->
<path d="M493 122 L512 118 L515 126 L506 131 L496 130Z" fill="#151515"/>
<circle cx="498" cy="123" r="4" fill="none" stroke="#222" stroke-width="1.5"/>
<!-- right shoulder pad -->
<path d="M525 143 L541.7 142 L558.4 148.6 L569.6 159.8 L574.3 171 L575.2 182.2 L571.5 187.8 L560.3 186 L554.7 174.7 L538 171 L530.5 167.3 L526.8 156Z" fill="url(#org)"/>
<path d="M559 156 L567 159 M560 159.5 L568 162.5 M561 163 L569 166" stroke="#3a1a08" stroke-width="1"/>
<ellipse cx="537" cy="169" rx="5" ry="3" fill="#ffd0a0" opacity="0.6"/>
<!-- LEFT ARM -->
<path d="M424 171 L407 178.6 L398 197 L393 216 L391 226 L410 228 L418 222 L427 212 L427 180Z" fill="#0e0e0e"/>
<path d="M424 171 L407 178.6 L398 197 L393 216 L396 217 L401 199 L409 182 L425 175Z" fill="#d4560e"/>
<path d="M400 194 L418 192 L419 224 L402 224Z" fill="#383838"/>
<path d="M405 200 L414 199 L414 212 L406 213Z" fill="#555"/>
<path d="M392.4 225 L409 227 L410 251 L388.6 251Z" fill="url(#org2)"/>
<path d="M385 252 L405 254 L410 272 L392 272 L380 262Z" fill="#101010"/>
<circle cx="399" cy="264" r="5.2" fill="none" stroke="#d8601c" stroke-width="1.8"/>
<path d="M400 266 L412 270 L428 278 L443 292 L432 302 L415 297 L405 278Z" fill="#0e0e0e"/>
<path d="M407.5 280 L429.8 275 L442 292 L432 302 L415 297Z" fill="url(#org)"/>
<path d="M412 286 L436 282" stroke="#402010" stroke-width="1"/>
<!-- PELVIS / HIP -->
<path d="M430 302 L448 296 L475 305 L505 320 L500 345 L474 344 L452 338 L432 332Z" fill="#0c0c0c"/>
<path d="M427 302 L440 296 L432 304 L430 322 L436 335 L427 322Z" fill="#dc5a10"/>
<path d="M432 300 L474 318 L495 330 L509 357 L520 385 L510 395 L484 380 L482 359 L452 354 L440 346 L430 332Z" fill="#0c0c0c"/>
<ellipse cx="455" cy="342" rx="4" ry="2" fill="#e8e8e8" opacity="0.7"/>
<!-- RIGHT THIGH (behind panel black) -->
<path d="M474 319 L510 300 L540 360 L548 385 L520 395 L495 355Z" fill="#0c0c0c"/>
<!-- left shin -->
<path d="M452 354 L482 359 L472 400 L460 417 L432 417 L437 400Z" fill="#0b0b0b"/>
<path d="M454.7 356.8 L479.5 361 L479 366 L454 362Z" fill="#e06a24"/>
<ellipse cx="466" cy="364" rx="4" ry="1.5" fill="#ffe0c0" opacity="0.6"/>
<!-- left ankle & foot -->
<path d="M412 422 L420 422 L435 435 L445 457 L460 452 L460 418 L472 420 L470 450 L450 462 L437 460 L417 445Z" fill="#0c0c0c"/>
<path d="M422.4 407.3 L434.8 402.4 L459.6 417.3 L459.6 449.6 L449.7 459.5 L444.7 457 L434.8 434.7 L420 422.2Z" fill="url(#org2)"/>
<path d="M423 408 L435 403 L459 417 L445 421 L430 415Z" fill="#8a3a0c"/>
<!-- right lower shin black -->
<path d="M497 395 L509 390 L509 417 L494 440 L474.5 447 L482 420Z" fill="#0d0d0d"/>
<!-- right thigh orange panel -->
<path d="M474.5 319.5 L496.9 297.1 L509.3 298.4 L519.3 322 L539.1 364.2 L546.6 379.1 L539.1 389 L524.2 384.1 L509.3 356.8 L494.4 329.4Z" fill="url(#org2)"/>
<path d="M509.3 298.4 L519.3 322 L539.1 364.2 L546.6 379.1 L543 382 L534 364 L514 322 L505 300Z" fill="#a8420e"/>
<!-- knee & lower shin orange -->
<path d="M516.8 387.5 L539.1 387.5 L546.6 402.4 L516.8 442.1 L499.4 452 L496.9 439.6Z" fill="url(#org)"/>
<circle cx="530" cy="386" r="4" fill="#9a3a08"/>
<!-- black left of foot guard -->
<path d="M414.9 474.4 L437.3 462 L457.1 472 L474.5 491.8 L496.9 519.1 L504.3 539 L483 537 L461 522 L445 503 L437 490 L419.9 479.4Z" fill="#0c0c0c"/>
<path d="M414.9 475.7 L425 471 L423 478Z" fill="#dc5a10"/>
<path d="M437.3 484.3 L449.7 489 L446 492 L438 490Z" fill="#dc5a10"/>
<!-- black behind foot guard right -->
<path d="M496 448 L503 452 L514.3 479.4 L524.2 504.2 L528.5 524 L511.8 529 L500 470Z" fill="#0c0c0c"/>
<!-- foot guard orange -->
<path d="M442.2 459.5 L482 444.6 L493 443.4 L499 455 L500 470 L503 486 L506 500 L509.3 512 L510.6 529 L506.8 539 L494.4 519.1 L479.5 496.8 L457.1 471.9Z" fill="url(#org)"/>
<circle cx="489.5" cy="453.5" r="2.5" fill="#1a1a1a"/>
<!-- feet -->
<path d="M462.5 557.5 L471 546.6 L489.7 535.7 L495.9 536.5 L502.1 543.5 L499 552.8 L486.6 557.5 L474.2 561.4Z" fill="#0c0c0c"/>
<path d="M463 556 L468 549 L476 546 L472 556Z" fill="#dc5a10"/>
<path d="M502.1 555.9 L506.8 545 L520.8 537.3 L530.1 546.6 L532.4 562.1 L527 576.1 L514.6 580.8 L503.7 574.6Z" fill="#0c0c0c"/>
<path d="M505.2 569.9 L513 560.6 L523.9 562.1 L528.5 571.5 L517.7 576.1Z" fill="#dc5a10"/>
<path d="M509.9 500 L528.5 500 L528.5 523.3 L536.3 524.9 L558 531 L575.1 545 L570.5 551.3 L551.8 554.4 L541 549.7 L527 538.8 L523.9 523.3 L515 525Z" fill="#0c0c0c"/>
</g>
</svg>
<div class="a" style="left:1075px;top:89px;width:125px;height:519px;background:#e4e7eb"></div>
<div class="a" style="left:1079px;top:91.5px;width:121px;height:516.5px;background:#f7f8fa;border:1px solid #c6c9ce"></div>
<div class="a" style="left:1080px;top:92.5px;width:120px;height:15px;background:#e9ebef"></div>
<svg class="a" style="left:1080px;top:94px" width="120" height="15"><path d="M25 14 V1 H48 L55 13.5 V14Z" fill="#dde1e8" stroke="#c8ccd3" stroke-width="0.8"/><path d="M52 14 V1 H75 L82 13.5 V14Z" fill="#dde1e8" stroke="#c8ccd3" stroke-width="0.8"/><path d="M79 14 V1 H101 L108 13.5 V14Z" fill="#dde1e8" stroke="#c8ccd3" stroke-width="0.8"/><path d="M0.5 14 V1 H21 L28 13.5 V14Z" fill="#fafbfc" stroke="#c8ccd3" stroke-width="0.8"/><circle cx="7" cy="7" r="3.6" fill="none" stroke="url(#cw)" stroke-width="2"/><path d="M29 2 L37 4 L36 11 L32 13 L29 10Z" fill="#c9302a" stroke="#4a4a6a" stroke-width="0.8"/><rect x="55" y="2.5" width="9" height="7" fill="#ccc" stroke="#222" stroke-width="1.2"/><rect x="57" y="10" width="5" height="2" fill="#222"/><rect x="82" y="2.5" width="9" height="9" fill="#3a6ad8" stroke="#334" stroke-width="0.8"/><path d="M84 9 L87 5 L90 9" stroke="#cde" fill="none"/><circle cx="114.3" cy="8.6" r="3.6" fill="none" stroke="#a9acb2" stroke-width="1.6" stroke-dasharray="1.5 1"/><circle cx="114.3" cy="8.6" r="1.4" fill="none" stroke="#a9acb2" stroke-width="0.8"/></svg>
<div class="a" style="left:1093.5px;top:96px;font-size:9px;color:#222;letter-spacing:-0.3px">P<span style="font-size:6px">_</span></div>
<div class="a" style="left:1119.5px;top:96px;font-size:9px;color:#222;letter-spacing:-0.3px">L<span style="font-size:6px">_</span></div>
<div class="a" style="left:1146.5px;top:96px;font-size:9px;color:#222;letter-spacing:-0.3px">D<span style="font-size:6px">_</span></div>
<div class="a" style="left:1173px;top:96px;font-size:9px;color:#222;letter-spacing:-0.3px">H<span style="font-size:6px">_</span></div>
<div class="a" style="left:1083px;top:112px;width:112px;height:290px;background:#f5f6f8;border:1px solid #e6e8eb"></div>
<div class="a" style="left:1084.5px;top:117.0px;font-size:8.5px;color:#222">Viewport</div>
<div class="a" style="left:1084px;top:130.5px;width:54px;height:13.0px;background:#fff;border-bottom:1px solid #e2e4e8"></div>
<div class="a" style="left:1138px;top:130.5px;width:56.5px;height:13.0px;background:#fff;border-bottom:1px solid #e2e4e8;border-left:1px solid #e2e4e8"></div>
<div class="a" style="left:1090px;top:133.0px;font-size:8.5px;letter-spacing:-0.2px;color:#222">Title</div>
<div class="a" style="left:1141px;top:133.0px;font-size:8.5px;letter-spacing:-0.2px;color:#222">Perspective</div>
<div class="a" style="left:1084px;top:143.5px;width:54px;height:13.5px;background:#fff;border-bottom:1px solid #e2e4e8"></div>
<div class="a" style="left:1138px;top:143.5px;width:56.5px;height:13.5px;background:#dcdde0;border-bottom:1px solid #e2e4e8;border-left:1px solid #e2e4e8"></div>
<div class="a" style="left:1090px;top:146.0px;font-size:8.5px;letter-spacing:-0.2px;color:#9a9a9a">Width</div>
<div class="a" style="left:1141px;top:146.0px;font-size:8.5px;letter-spacing:-0.2px;color:#9a9a9a">1654</div>
<div class="a" style="left:1084px;top:157px;width:54px;height:14px;background:#fff;border-bottom:1px solid #e2e4e8"></div>
<div class="a" style="left:1138px;top:157px;width:56.5px;height:14px;background:#dcdde0;border-bottom:1px solid #e2e4e8;border-left:1px solid #e2e4e8"></div>
<div class="a" style="left:1090px;top:159.5px;font-size:8.5px;letter-spacing:-0.2px;color:#9a9a9a">Height</div>
<div class="a" style="left:1141px;top:159.5px;font-size:8.5px;letter-spacing:-0.2px;color:#9a9a9a">805</div>
<div class="a" style="left:1084px;top:171px;width:54px;height:14px;background:#fff;border-bottom:1px solid #e2e4e8"></div>
<div class="a" style="left:1138px;top:171px;width:56.5px;height:14px;background:#fff;border-bottom:1px solid #e2e4e8;border-left:1px solid #e2e4e8"></div>
<div class="a" style="left:1090px;top:173.5px;font-size:8.5px;letter-spacing:-0.2px;color:#222">Projection</div>
<div class="a" style="left:1141px;top:173.5px;font-size:8.5px;letter-spacing:-0.2px;color:#222">Perspect...</div>
<div class="a" style="left:1182px;top:172px;width:12px;height:12px;background:#e6e7ea;border:1px solid #d0d2d6"></div>
<svg class="a" style="left:1185px;top:176px" width="7" height="5"><path d="M0.5 0.5 L3.5 3.5 L6.5 0.5" fill="none" stroke="#666" stroke-width="1"/></svg>
<div class="a" style="left:1084.5px;top:187.5px;font-size:8.5px;color:#222">Camera</div>
<div class="a" style="left:1084px;top:201px;width:54px;height:13.599999999999994px;background:#fff;border-bottom:1px solid #e2e4e8"></div>
<div class="a" style="left:1138px;top:201px;width:56.5px;height:13.599999999999994px;background:#fff;border-bottom:1px solid #e2e4e8;border-left:1px solid #e2e4e8"></div>
<div class="a" style="left:1090px;top:203.5px;font-size:8.5px;letter-spacing:-0.2px;color:#222">Lens Length</div>
<div class="a" style="left:1141px;top:203.5px;font-size:8.5px;letter-spacing:-0.2px;color:#222">30.0</div>
<div class="a" style="left:1084px;top:214.6px;width:54px;height:13.900000000000006px;background:#fff;border-bottom:1px solid #e2e4e8"></div>
<div class="a" style="left:1138px;top:214.6px;width:56.5px;height:13.900000000000006px;background:#fff;border-bottom:1px solid #e2e4e8;border-left:1px solid #e2e4e8"></div>
<div class="a" style="left:1090px;top:217.1px;font-size:8.5px;letter-spacing:-0.2px;color:#222">X Location</div>
<div class="a" style="left:1141px;top:217.1px;font-size:8.5px;letter-spacing:-0.2px;color:#222">-1276.302</div>
<div class="a" style="left:1084px;top:228.5px;width:54px;height:14.0px;background:#fff;border-bottom:1px solid #e2e4e8"></div>
<div class="a" style="left:1138px;top:228.5px;width:56.5px;height:14.0px;background:#fff;border-bottom:1px solid #e2e4e8;border-left:1px solid #e2e4e8"></div>
<div class="a" style="left:1090px;top:231.0px;font-size:8.5px;letter-spacing:-0.2px;color:#222">Y Location</div>
<div class="a" style="left:1141px;top:231.0px;font-size:8.5px;letter-spacing:-0.2px;color:#222">-11848.207</div>
<div class="a" style="left:1084px;top:242.5px;width:54px;height:14.0px;background:#fff;border-bottom:1px solid #e2e4e8"></div>
<div class="a" style="left:1138px;top:242.5px;width:56.5px;height:14.0px;background:#fff;border-bottom:1px solid #e2e4e8;border-left:1px solid #e2e4e8"></div>
<div class="a" style="left:1090px;top:245.0px;font-size:8.5px;letter-spacing:-0.2px;color:#222">Z Location</div>
<div class="a" style="left:1141px;top:245.0px;font-size:8.5px;letter-spacing:-0.2px;color:#222">782.046</div>
<div class="a" style="left:1084px;top:256.5px;width:54px;height:13.5px;background:#fff;border-bottom:1px solid #e2e4e8"></div>
<div class="a" style="left:1138px;top:256.5px;width:56.5px;height:13.5px;background:#fff;border-bottom:1px solid #e2e4e8;border-left:1px solid #e2e4e8"></div>
<div class="a" style="left:1090px;top:259.0px;font-size:8.5px;letter-spacing:-0.2px;color:#222">Location</div>
<div class="a" style="left:1139px;top:258.0px;width:55.5px;height:11.0px;background:#e1e1e1;border:1px solid #b9b9b9"></div>
<div class="a" style="left:1153.5px;top:259.0px;font-size:8.5px;color:#222">Place...</div>
<div class="a" style="left:1084.5px;top:272.5px;font-size:8.5px;color:#222">Target</div>
<div class="a" style="left:1084px;top:286px;width:54px;height:14px;background:#fff;border-bottom:1px solid #e2e4e8"></div>
<div class="a" style="left:1138px;top:286px;width:56.5px;height:14px;background:#fff;border-bottom:1px solid #e2e4e8;border-left:1px solid #e2e4e8"></div>
<div class="a" style="left:1090px;top:288.5px;font-size:8.5px;letter-spacing:-0.2px;color:#222">X Target</div>
<div class="a" style="left:1141px;top:288.5px;font-size:8.5px;letter-spacing:-0.2px;color:#222">2299.011</div>
<div class="a" style="left:1084px;top:300px;width:54px;height:14px;background:#fff;border-bottom:1px solid #e2e4e8"></div>
<div class="a" style="left:1138px;top:300px;width:56.5px;height:14px;background:#fff;border-bottom:1px solid #e2e4e8;border-left:1px solid #e2e4e8"></div>
<div class="a" style="left:1090px;top:302.5px;font-size:8.5px;letter-spacing:-0.2px;color:#222">Y Target</div>
<div class="a" style="left:1141px;top:302.5px;font-size:8.5px;letter-spacing:-0.2px;color:#222">555.041</div>
<div class="a" style="left:1084px;top:314px;width:54px;height:14.699999999999989px;background:#fff;border-bottom:1px solid #e2e4e8"></div>
<div class="a" style="left:1138px;top:314px;width:56.5px;height:14.699999999999989px;background:#fff;border-bottom:1px solid #e2e4e8;border-left:1px solid #e2e4e8"></div>
<div class="a" style="left:1090px;top:316.5px;font-size:8.5px;letter-spacing:-0.2px;color:#222">Z Target</div>
<div class="a" style="left:1141px;top:316.5px;font-size:8.5px;letter-spacing:-0.2px;color:#222">-479.061</div>
<div class="a" style="left:1084px;top:328.7px;width:54px;height:12.699999999999989px;background:#fff;border-bottom:1px solid #e2e4e8"></div>
<div class="a" style="left:1138px;top:328.7px;width:56.5px;height:12.699999999999989px;background:#fff;border-bottom:1px solid #e2e4e8;border-left:1px solid #e2e4e8"></div>
<div class="a" style="left:1090px;top:331.2px;font-size:8.5px;letter-spacing:-0.2px;color:#222">Location</div>
<div class="a" style="left:1139px;top:330.2px;width:55.5px;height:10.199999999999989px;background:#e1e1e1;border:1px solid #b9b9b9"></div>
<div class="a" style="left:1153.5px;top:331.2px;font-size:8.5px;color:#222">Place...</div>
<div class="a" style="left:1084.5px;top:344.5px;font-size:8.5px;color:#222">Wallpaper</div>
<div class="a" style="left:1084px;top:358px;width:54px;height:14px;background:#fff;border-bottom:1px solid #e2e4e8"></div>
<div class="a" style="left:1138px;top:358px;width:56.5px;height:14px;background:#fff;border-bottom:1px solid #e2e4e8;border-left:1px solid #e2e4e8"></div>
<div class="a" style="left:1090px;top:360.5px;font-size:8.5px;letter-spacing:-0.2px;color:#222">Filename</div>
<div class="a" style="left:1141px;top:360.5px;font-size:8.5px;letter-spacing:-0.2px;color:#222">(none)</div>
<div class="a" style="left:1182px;top:359.5px;width:12px;height:11px;background:#e1e1e1;border:1px solid #c0c0c0"></div>
<div class="a" style="left:1184.5px;top:360px;font-size:7px;color:#444">...</div>
<div class="a" style="left:1084px;top:372px;width:54px;height:14px;background:#fff;border-bottom:1px solid #e2e4e8"></div>
<div class="a" style="left:1138px;top:372px;width:56.5px;height:14px;background:#fff;border-bottom:1px solid #e2e4e8;border-left:1px solid #e2e4e8"></div>
<div class="a" style="left:1090px;top:374.5px;font-size:8.5px;letter-spacing:-0.2px;color:#222">Show</div>
<div class="a" style="left:1140.5px;top:373.4px;width:12px;height:12px;background:#fff;border:1px solid #4a4a4a"></div>
<svg class="a" style="left:1140.5px;top:373.4px" width="12" height="12"><path d="M2.5 6 L5 9 L9.5 3" fill="none" stroke="#222" stroke-width="1"/></svg>
<div class="a" style="left:1084px;top:386px;width:54px;height:14px;background:#fff;border-bottom:1px solid #e2e4e8"></div>
<div class="a" style="left:1138px;top:386px;width:56.5px;height:14px;background:#fff;border-bottom:1px solid #e2e4e8;border-left:1px solid #e2e4e8"></div>
<div class="a" style="left:1090px;top:388.5px;font-size:8.5px;letter-spacing:-0.2px;color:#222">Gray</div>
<div class="a" style="left:1140.5px;top:387.4px;width:12px;height:12px;background:#fff;border:1px solid #4a4a4a"></div>
<svg class="a" style="left:1140.5px;top:387.4px" width="12" height="12"><path d="M2.5 6 L5 9 L9.5 3" fill="none" stroke="#222" stroke-width="1"/></svg>
<svg class="a" style="left:40px;top:593px" width="190" height="17"><path d="M1 0 H60 V14 Q60 16 58 16 H8 Q6 16 5 14 Z" fill="#fbfbfc" stroke="#cfd3d9" stroke-width="1"/><path d="M61 0 H96 V14 Q96 16 94 16 H67 Q65 16 64 14 Z" fill="#dde1e8" stroke="#cdd1d8" stroke-width="1"/><path d="M97 0 H132 V14 Q132 16 130 16 H103 Q101 16 100 14 Z" fill="#dde1e8" stroke="#cdd1d8" stroke-width="1"/><path d="M133 0 H162 V14 Q162 16 160 16 H139 Q137 16 136 14 Z" fill="#dde1e8" stroke="#cdd1d8" stroke-width="1"/><path d="M163 0 H186 V14 Q186 16 184 16 H169 Q167 16 166 14 Z" fill="#e6e9ee" stroke="#cdd1d8" stroke-width="1"/><path d="M172 8 H180 M176 4 V12" stroke="#777" stroke-width="1.2"/><circle cx="176" cy="8" r="2" fill="none" stroke="#777" stroke-width="0.8"/></svg>
<div class="a t9" style="left:48.5px;top:597px">Perspective</div>
<div class="a t9" style="left:109.8px;top:597px">Front</div>
<div class="a t9" style="left:145.7px;top:597px">Front</div>
<div class="a t9" style="left:180.7px;top:597px">Top</div>
<div class="a" style="left:5.5px;top:614.5px;width:13px;height:13px;background:#fff;border:1px solid #4a4a4a"></div>
<svg class="a" style="left:5.5px;top:614.5px" width="13" height="13"><path d="M3 6.5 L5.5 9.5 L10.5 3.5" fill="none" stroke="#222" stroke-width="1"/></svg>
<div class="a" style="left:20.5px;top:616px;font-size:8.5px;letter-spacing:-0.1px;color:#222">End</div>
<div class="a" style="left:38.75px;top:614.5px;width:13px;height:13px;background:#fff;border:1px solid #4a4a4a"></div>
<svg class="a" style="left:38.75px;top:614.5px" width="13" height="13"><path d="M3 6.5 L5.5 9.5 L10.5 3.5" fill="none" stroke="#222" stroke-width="1"/></svg>
<div class="a" style="left:53px;top:616px;font-size:8.5px;letter-spacing:-0.1px;color:#222">Near</div>
<div class="a" style="left:75.5px;top:614.5px;width:13px;height:13px;background:#fff;border:1px solid #4a4a4a"></div>
<svg class="a" style="left:75.5px;top:614.5px" width="13" height="13"><path d="M3 6.5 L5.5 9.5 L10.5 3.5" fill="none" stroke="#222" stroke-width="1"/></svg>
<div class="a" style="left:90.5px;top:616px;font-size:8.5px;letter-spacing:-0.1px;color:#222">Point</div>
<div class="a" style="left:112px;top:614.5px;width:13px;height:13px;background:#fff;border:1px solid #4a4a4a"></div>
<svg class="a" style="left:112px;top:614.5px" width="13" height="13"><path d="M3 6.5 L5.5 9.5 L10.5 3.5" fill="none" stroke="#222" stroke-width="1"/></svg>
<div class="a" style="left:127.5px;top:616px;font-size:8.5px;letter-spacing:-0.1px;color:#222">Mid</div>
<div class="a" style="left:144.5px;top:614.5px;width:13px;height:13px;background:#fff;border:1px solid #4a4a4a"></div>
<svg class="a" style="left:144.5px;top:614.5px" width="13" height="13"><path d="M3 6.5 L5.5 9.5 L10.5 3.5" fill="none" stroke="#222" stroke-width="1"/></svg>
<div class="a" style="left:159px;top:616px;font-size:8.5px;letter-spacing:-0.1px;color:#222">Cen</div>
<div class="a" style="left:177.5px;top:614.5px;width:13px;height:13px;background:#fff;border:1px solid #4a4a4a"></div>
<svg class="a" style="left:177.5px;top:614.5px" width="13" height="13"><path d="M3 6.5 L5.5 9.5 L10.5 3.5" fill="none" stroke="#222" stroke-width="1"/></svg>
<div class="a" style="left:192.5px;top:616px;font-size:8.5px;letter-spacing:-0.1px;color:#222">Int</div>
<div class="a" style="left:203.75px;top:614.5px;width:13px;height:13px;background:#fff;border:1px solid #4a4a4a"></div>
<svg class="a" style="left:203.75px;top:614.5px" width="13" height="13"><path d="M3 6.5 L5.5 9.5 L10.5 3.5" fill="none" stroke="#222" stroke-width="1"/></svg>
<div class="a" style="left:218.75px;top:616px;font-size:8.5px;letter-spacing:-0.1px;color:#222">Perp</div>
<div class="a" style="left:240px;top:614.5px;width:13px;height:13px;background:#fff;border:1px solid #4a4a4a"></div>
<svg class="a" style="left:240px;top:614.5px" width="13" height="13"><path d="M3 6.5 L5.5 9.5 L10.5 3.5" fill="none" stroke="#222" stroke-width="1"/></svg>
<div class="a" style="left:255px;top:616px;font-size:8.5px;letter-spacing:-0.1px;color:#222">Tan</div>
<div class="a" style="left:273px;top:614.5px;width:13px;height:13px;background:#fff;border:1px solid #4a4a4a"></div>
<svg class="a" style="left:273px;top:614.5px" width="13" height="13"><path d="M3 6.5 L5.5 9.5 L10.5 3.5" fill="none" stroke="#222" stroke-width="1"/></svg>
<div class="a" style="left:288px;top:616px;font-size:8.5px;letter-spacing:-0.1px;color:#222">Quad</div>
<div class="a" style="left:312px;top:614.5px;width:13px;height:13px;background:#fff;border:1px solid #4a4a4a"></div>
<svg class="a" style="left:312px;top:614.5px" width="13" height="13"><path d="M3 6.5 L5.5 9.5 L10.5 3.5" fill="none" stroke="#222" stroke-width="1"/></svg>
<div class="a" style="left:327px;top:616px;font-size:8.5px;letter-spacing:-0.1px;color:#222">Knot</div>
<div class="a" style="left:346.25px;top:614.5px;width:13px;height:13px;background:#fff;border:1px solid #4a4a4a"></div>
<svg class="a" style="left:346.25px;top:614.5px" width="13" height="13"><path d="M3 6.5 L5.5 9.5 L10.5 3.5" fill="none" stroke="#222" stroke-width="1"/></svg>
<div class="a" style="left:361.25px;top:616px;font-size:8.5px;letter-spacing:-0.1px;color:#222">Vertex</div>
<div class="a" style="left:388.75px;top:614.5px;width:13px;height:13px;background:#e8eaee;border:1px solid #c4c7cc"></div>
<div class="a" style="left:403px;top:616px;font-size:8.5px;letter-spacing:-0.1px;color:#555">Project</div>
<div class="a" style="left:433px;top:614.5px;width:13px;height:13px;background:#e8eaee;border:1px solid #c4c7cc"></div>
<div class="a" style="left:447.5px;top:616px;font-size:8.5px;letter-spacing:-0.1px;color:#555">Disable</div>
<div class="a" style="left:0;top:630px;width:1200px;height:14px;background:#e1e4e9;border-top:1px solid #c2c5cb"></div>
<div class="a" style="left:42.5px;top:631px;width:1px;height:13px;background:#c6c9cf"></div>
<div class="a" style="left:98px;top:631px;width:1px;height:13px;background:#c6c9cf"></div>
<div class="a" style="left:151px;top:631px;width:1px;height:13px;background:#c6c9cf"></div>
<div class="a" style="left:207.5px;top:631px;width:1px;height:13px;background:#c6c9cf"></div>
<div class="a" style="left:370.5px;top:631px;width:1px;height:13px;background:#c6c9cf"></div>
<div class="a" style="left:425px;top:631px;width:1px;height:13px;background:#c6c9cf"></div>
<div class="a" style="left:463.5px;top:631px;width:1px;height:13px;background:#c6c9cf"></div>
<div class="a" style="left:502.5px;top:631px;width:1px;height:13px;background:#c6c9cf"></div>
<div class="a" style="left:543px;top:631px;width:1px;height:13px;background:#c6c9cf"></div>
<div class="a" style="left:609px;top:631px;width:1px;height:13px;background:#c6c9cf"></div>
<div class="a" style="left:657.5px;top:631px;width:1px;height:13px;background:#c6c9cf"></div>
<div class="a" style="left:739px;top:631px;width:1px;height:13px;background:#c6c9cf"></div>
<div class="a" style="left:772.5px;top:631px;width:1px;height:13px;background:#c6c9cf"></div>
<div class="a" style="left:1195px;top:631px;width:1px;height:13px;background:#c6c9cf"></div>
<div class="a" style="left:371px;top:631px;width:54px;height:13px;background:#dfe8f0"></div>
<div class="a" style="left:426px;top:631px;width:37px;height:13px;background:#dfe8f0"></div>
<div class="a" style="left:503px;top:631px;width:40px;height:13px;background:#dfe8f0"></div>
<div class="a" style="left:544px;top:631px;width:65px;height:13px;background:#dfe8f0"></div>
<div class="a" style="left:5.5px;top:633px;font-size:9px;color:#1e1e1e">CPlane</div>
<div class="a" style="left:46px;top:633px;font-size:9px;color:#1e1e1e">x -3197.746</div>
<div class="a" style="left:102.5px;top:633px;font-size:9px;color:#1e1e1e">y 2002.891</div>
<div class="a" style="left:165px;top:633px;font-size:9px;color:#1e1e1e">z 0.000</div>
<div class="a" style="left:213px;top:633px;font-size:9px;color:#1e1e1e">Millimeters</div>
<div class="a" style="left:275.5px;top:633px;font-size:9px;color:#1e1e1e">Layer 01</div>
<div class="a" style="left:377.5px;top:633px;font-size:9px;font-weight:bold;color:#1e1e1e">Grid Snap</div>
<div class="a" style="left:432.5px;top:633px;font-size:9px;font-weight:bold;color:#1e1e1e">Ortho</div>
<div class="a" style="left:470.75px;top:633px;font-size:9px;color:#444">Planar</div>
<div class="a" style="left:510px;top:633px;font-size:9px;font-weight:bold;color:#1e1e1e">Osnap</div>
<div class="a" style="left:551px;top:633px;font-size:9px;font-weight:bold;color:#1e1e1e">SmartTrack</div>
<div class="a" style="left:616.5px;top:633px;font-size:9px;color:#1e1e1e">Gumball</div>
<div class="a" style="left:668px;top:633px;font-size:9px;color:#1e1e1e">Record History</div>
<div class="a" style="left:745px;top:633px;font-size:9px;color:#1e1e1e">Filter</div>
<div class="a" style="left:774px;top:633px;font-size:9px;color:#1e1e1e">Memory use: 880 MB</div>
<div class="a" style="left:264.5px;top:633.5px;width:10px;height:10px;background:#e0141b;border:1px solid #a00"></div>
</body></html>
